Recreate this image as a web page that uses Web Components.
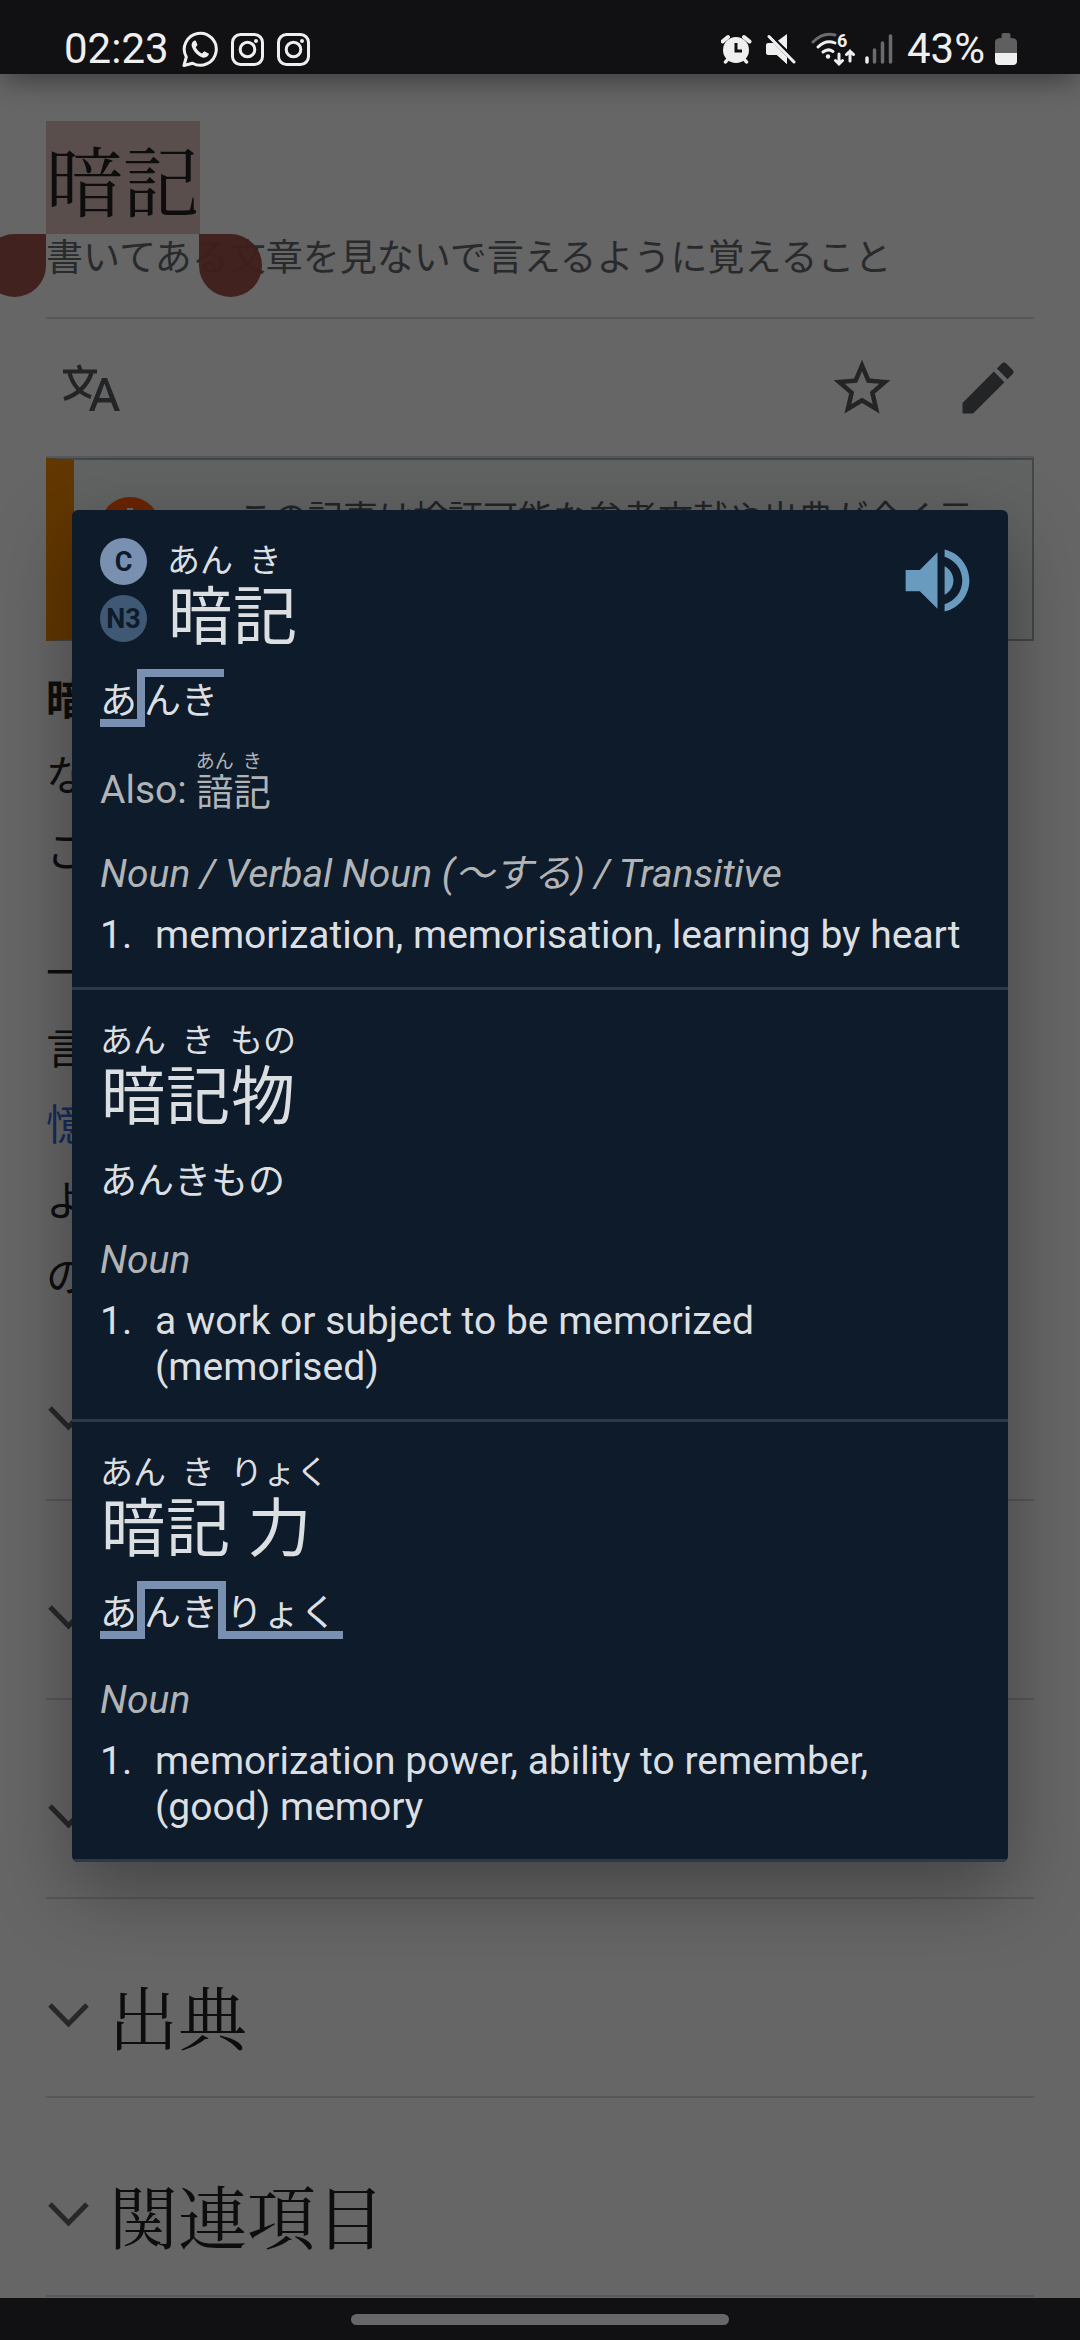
<!DOCTYPE html>
<html lang="ja">
<head>
<meta charset="utf-8">
<meta name="viewport" content="width=device-width, initial-scale=1">
<title>暗記</title>
<style>
  html, body { margin: 0; background: #666; }
  body {
    --jp: "Noto Sans CJK JP";
    --mincho: "Noto Serif CJK JP", "Noto Serif JP", "Noto Sans CJK JP", serif;
    font-family: Roboto, var(--jp), sans-serif;
  }
</style>
</head>
<body>
<app-screen>
  <status-bar slot="status"></status-bar>

  <article-header heading="暗記" description="書いてある文章を見ないで言えるように覚えること"></article-header>
  <article-toolbar></article-toolbar>
  <issue-notice>この記事は検証可能な参考文献や出典が全く示</issue-notice>
  <article-text><p><b>暗</b><br>な<br>こ</p><p>一<br>言<br><a href="#memory">憶</a><br>よ<br>の</p></article-text>
  <article-section first></article-section>
  <article-section></article-section>
  <article-section></article-section>
  <article-section>出典</article-section>
  <article-section>関連項目</article-section>

  <dictionary-popup slot="popup">
    <dictionary-entry pos="Noun / Verbal Noun (〜する) / Transitive" audio>
      <level-badge slot="badge">C</level-badge>
      <level-badge slot="badge" muted>N3</level-badge>
      <furi-text slot="head" text="暗:あん 記:き"></furi-text>
      <pitch-reading slot="reading" parts="あ:low んき:high"></pitch-reading>
      <also-line slot="also">Also: <furi-text small text="諳:あん 記:き"></furi-text></also-line>
      memorization, memorisation, learning by heart
    </dictionary-entry>
    <dictionary-entry pos="Noun">
      <furi-text slot="head" text="暗:あん 記:き 物:もの"></furi-text>
      <pitch-reading slot="reading" parts="あんきもの"></pitch-reading>
      a work or subject to be memorized (memorised)
    </dictionary-entry>
    <dictionary-entry pos="Noun">
      <furi-text slot="head" text="暗:あん 記:き 力:りょく"></furi-text>
      <pitch-reading slot="reading" parts="あ:low んき:high-drop りょく:low-end"></pitch-reading>
      memorization power, ability to remember, (good) memory
    </dictionary-entry>
  </dictionary-popup>

  <nav-bar slot="nav"></nav-bar>
</app-screen>

<script>
const component = (name, render) => customElements.define(name, class extends HTMLElement {
  constructor() { super(); this.attachShadow({ mode: 'open' }); }
  connectedCallback() { this.shadowRoot.innerHTML = render(this); }
});

component('app-screen', () => `
  <style>
    :host { display: flex; flex-direction: column; position: relative; min-height: 100vh; overflow: hidden; background: #666; }
    main { flex: 1; padding: 0 46px; }
  </style>
  <slot name="status"></slot>
  <main><slot></slot></main>
  <slot name="nav"></slot>
  <slot name="popup"></slot>`);

component('status-bar', () => `
  <style>
    :host { display: flex; justify-content: space-between; align-items: flex-end; height: 74px; padding: 0 63px 0 64px;
      box-sizing: border-box; background: #111113; color: #efefef; font-size: 42px; line-height: 48px; position: relative; z-index: 1;
      box-shadow: 0 10px 28px -4px rgba(0,0,0,.42); }
    div { display: flex; align-items: center; height: 50px; }
    svg { display: block; }
    .left { gap: 13px; } .right { gap: 10px; }
    .percent { margin-left: 4px; }
    .six { font: 700 18px Roboto, sans-serif; }
  </style>
  <div class="left">
    <span>02:23</span>
    <svg width="36" height="36" viewBox="0 0 36 36"><path d="M2 34.500L4.300 26A16 16 0 1 1 10.500 32.200Z" fill="none" stroke="#efefef" stroke-width="3" stroke-linejoin="round"/><path d="M12.500 9.500C10.500 10.500 9 12.800 9.800 15.500C11.500 20.500 15.500 24.800 20.500 26.500C23.500 27.300 26.500 25.500 27 22.800L22.300 20.200L20 22.500C17.500 21.500 15 19 13.700 16.300L15.500 13.900L13.800 9.800Z" fill="#efefef"/></svg>
    <svg width="33" height="33" viewBox="0 0 33 33" fill="none" stroke="#efefef" stroke-width="3"><rect x="1.500" y="1.500" width="30" height="30" rx="8"/><circle cx="16.500" cy="16.500" r="7.300"/><circle cx="25" cy="8" r="2" fill="#efefef" stroke="none"/></svg>
    <svg width="33" height="33" viewBox="0 0 33 33" fill="none" stroke="#efefef" stroke-width="3"><rect x="1.500" y="1.500" width="30" height="30" rx="8"/><circle cx="16.500" cy="16.500" r="7.300"/><circle cx="25" cy="8" r="2" fill="#efefef" stroke="none"/></svg>
  </div>
  <div class="right">
    <svg width="34" height="30" viewBox="0 0 34 30"><circle cx="15" cy="16" r="13" fill="#efefef"/><path d="M1.500 7.500L7 3M28.500 7.500L23 3" stroke="#efefef" stroke-width="4" stroke-linecap="round"/><path d="M4.500 28L7 25M25.500 28L23 25" stroke="#efefef" stroke-width="3.500" stroke-linecap="round"/><path d="M15 9V17H21" fill="none" stroke="#111113" stroke-width="3"/></svg>
    <svg width="36" height="30" viewBox="0 0 36 30"><path d="M1 12Q1 9 4 9H9L22 21V30L12 21H4Q1 21 1 18ZM12.500 7L22 0V15.500Z" fill="#efefef"/><path d="M4 2.500L29 28" stroke="#111113" stroke-width="7"/><path d="M4 2.500L29 28" stroke="#efefef" stroke-width="3" stroke-linecap="round"/><path d="M1 12Q1 9 4 9H8.500L22 23V30L12 21H4Q1 21 1 18Z" fill="#efefef"/></svg>
    <svg width="44" height="45" viewBox="0 -6 44 45" fill="none" stroke-linecap="round" stroke-width="3"><path d="M2 9Q12 -1 24 2" stroke="#6b6b6c"/><path d="M7 14Q15 6 24 10M12 19Q17 15 22 18.500" stroke="#efefef"/><circle cx="17" cy="23.500" r="2.200" fill="#efefef"/><path d="M28 21V31M24.500 27.500L28 31L31.500 27.500M39 28V18M35.500 21.500L39 18L42.500 21.500" stroke="#efefef"/><text class="six" x="26" y="14" fill="#efefef">6</text></svg>
    <svg width="28" height="30" viewBox="0 0 28 30" stroke-linecap="round" stroke-width="3.500"><path d="M2 24V28" stroke="#efefef"/><path d="M9.500 16V28M17.500 9V28M25.500 2V28" stroke="#6b6b6c"/></svg>
    <span class="percent">43%</span>
    <svg width="22" height="32" viewBox="0 0 22 32"><path d="M6.500 5V2Q6.500 0 8.500 0H13.500Q15.500 0 15.500 2V5Q22 5 22 9V20H0V9Q0 5 6.500 5Z" fill="#5f5f60"/><path d="M0 20H22V28Q22 32 18 32H4Q0 32 0 28Z" fill="#efefef"/></svg>
  </div>`);

component('article-header', el => `
  <style>
    :host { display: block; padding: 47px 0 35px; border-bottom: 2px solid #55575b; }
    h1 { margin: 0; font: 400 77px/113px var(--mincho); color: #0d0d0d; display: flex; }
    mark { position: relative; background: #594e4c; color: inherit; }
    i { position: absolute; top: 100%; width: 63px; height: 63px; background: #3f1f1c; opacity: .96; box-sizing: border-box; }
    .start { right: 100%; border-radius: 32px 0 32px 32px; }
    .end { left: 153px; border-radius: 0 32px 32px 32px; }
    p { margin: 0; padding-top: 2px; font-size: 37px; line-height: 46px; color: #292a2c; }
  </style>
  <h1><mark>${el.getAttribute('heading')}<i class="start"></i><i class="end"></i></mark></h1>
  <p>${el.getAttribute('description')}</p>`);

component('article-toolbar', () => `
  <style>
    :host { display: flex; align-items: center; height: 137px; padding: 0 12px 0 11px; border-bottom: 2px solid #55575a; }
    button { border: 0; padding: 0; background: none; color: #232426; }
    svg { display: block; fill: currentColor; }
    .grow { flex: 1; }
    .star { margin-right: 58px; }
  </style>
  <button aria-label="言語"><svg width="68" height="68" viewBox="0 0 68 68"><path d="M6 17.500H40M21.500 11L24 17" fill="none" stroke="currentColor" stroke-width="4"/><path d="M12.500 19Q18 38 34 43M34.500 19Q28 38 7 45" fill="none" stroke="currentColor" stroke-width="4.200"/><path d="M45 24H50L63 57H57.500L54.300 48.500H40.500L37.300 57H32ZM42.200 44H52.700L47.500 29.500Z" fill-rule="evenodd"/></svg></button>
  <span class="grow"></span>
  <button class="star" aria-label="保存"><svg width="68" height="68" viewBox="0 0 24 24"><path d="M22 9.240l-7.190-.62L12 2 9.190 8.630 2 9.240l5.460 4.730L5.820 21 12 17.270 18.180 21l-1.630-7.030L22 9.240zM12 15.400l-3.760 2.270 1-4.280-3.320-2.880 4.380-.38L12 6.100l1.710 4.040 4.380.38-3.320 2.880 1 4.280L12 15.400z"/></svg></button>
  <button aria-label="編集"><svg width="68" height="68" viewBox="0 0 24 24"><path d="M3 17.250V21h3.750L17.810 9.940l-3.750-3.750L3 17.250zM20.710 7.040c.39-.39.39-1.020 0-1.410l-2.340-2.340c-.39-.39-1.020-.39-1.410 0l-1.830 1.830 3.750 3.750 1.830-1.830z"/></svg></button>`);

component('issue-notice', () => `
  <style>
    :host { display: flex; gap: 78px; height: 183px; box-sizing: border-box; padding: 37px 0 0 26px; border: 2px solid #43464a;
      border-left: 28px solid #623700; background: #606361; color: #232426; font-size: 35px; line-height: 46px; white-space: nowrap; overflow: hidden; }
    svg { flex: none; }
  </style>
  <svg width="60" height="60" viewBox="0 0 60 60"><circle cx="30" cy="30" r="30" fill="#6a2400"/><path d="M30 11V34M30 40V46" stroke="#666" stroke-width="6"/></svg>
  <span><slot></slot></span>`);

component('article-text', () => `
  <style>
    :host { display: block; font-size: 42px; line-height: 76px; color: #0e0e0e; padding-top: 22px; }
    ::slotted(p) { margin: 0 0 45px; }
    ::slotted(p:last-child) { margin: 0; }
  </style><slot></slot>`);

component('article-section', el => `
  <style>
    :host { display: block; padding: ${el.hasAttribute('first') ? 55 : 69}px 0 32px; border-bottom: 2px solid #55575a; }
    h2 { margin: 0; font: inherit; }
    button { display: flex; align-items: center; width: 100%; height: 96px; border: 0; padding: 0; background: none; text-align: left;
      font: 400 69px/96px var(--mincho); color: #0d0d0d; }
    svg { width: 63px; height: 40px; flex: none; }
  </style>
  <h2><button aria-expanded="false" aria-label="${el.textContent || '節'}"><svg viewBox="0 0 63 40"><path d="M4 9L22.500 28L41 9" fill="none" stroke="#26282a" stroke-width="5"/></svg><slot></slot></button></h2>`);

component('dictionary-popup', () => `
  <style>
    :host { display: block; position: absolute; z-index: 2; left: 72px; right: 72px; top: 510px; border-radius: 6px; overflow: hidden;
      background: #0e1b2a; color: #dcdfe2; box-shadow: 0 28px 76px rgba(0,0,0,.34); font-size: 39px; line-height: 46px; }
  </style><slot></slot>`);

component('dictionary-entry', el => `
  <style>
    :host { display: block; padding: 28px 28px 29px; border-bottom: 3px solid #2c3949; }
    header { display: flex; align-items: flex-start; }
    .badges { display: flex; flex-direction: column; gap: 10px; margin-right: ${el.querySelector('level-badge') ? 20 : 0}px; }
    .head { flex: 1; }
    button { border: 0; padding: 0; background: none; height: 85px; }
    svg { display: block; fill: #689bbd; }
    .pos { margin: 38px 0 15px; font-style: italic; color: #b1b4b7; }
    ol { margin: 0; padding: 0; list-style: none; }
    li { display: flex; }
    li > b { flex: none; width: 55px; font-weight: 400; }
  </style>
  <header>
    <div class="badges"><slot name="badge"></slot></div>
    <div class="head"><slot name="head"></slot></div>
    ${el.hasAttribute('audio') ? `<button aria-label="発音"><svg width="85" height="85" viewBox="0 0 24 24"><path d="M3 9v6h4l5 5V4L7 9H3zm13.500 3c0-1.770-1.020-3.290-2.500-4.030v8.050c1.480-.73 2.500-2.250 2.500-4.020zM14 3.230v2.060c2.890.86 5 3.540 5 6.710s-2.110 5.850-5 6.710v2.060c4.010-.91 7-4.490 7-8.770s-2.990-7.860-7-8.770z"/></svg></button>` : ''}
  </header>
  <slot name="reading"></slot>
  <slot name="also"></slot>
  <p class="pos">${el.getAttribute('pos')}</p>
  <ol><li><b>1.</b><span><slot></slot></span></li></ol>`);

component('level-badge', el => `
  <style>
    :host { display: flex; align-items: center; justify-content: center; width: 47px; height: 47px; border-radius: 50%;
      background: ${el.hasAttribute('muted') ? '#3f5975' : '#7a90b0'}; color: #0e1b2a; font-size: 27px; line-height: 30px; font-weight: 700; }
  </style><slot></slot>`);

component('furi-text', el => `
  <style>
    :host { display: flex; line-height: 68px; font-size: 64px; }
    :host([small]) { display: inline-flex; line-height: 38px; font-size: 37px; }
    ruby { display: flex; flex-direction: column-reverse; align-items: center; }
    rt { display: block; font-size: 33px; line-height: 46px; text-align: center; }
    :host([small]) rt { font-size: 19px; line-height: 26px; }
  </style>${el.getAttribute('text').split(' ').map(p => { const [k, f] = p.split(':'); return `<ruby><span>${k}</span><rt>${f}</rt></ruby>`; }).join('')}`);

component('pitch-reading', el => `
  <style>
    :host { display: flex; font-size: 37px; line-height: 50px; margin-top: 17px; --line: 8px solid #7a90b0; }
    span { display: block; }
    .low, .high, .high-drop, .low-end { padding: 8px 0; height: 42px; }
    .low { border-bottom: var(--line); border-right: var(--line); padding-bottom: 0; }
    .high { border-top: var(--line); padding-top: 0; padding-right: 6px; }
    .low + .high, .low + .high-drop { margin-left: -8px; padding-left: 7px; }
    .high-drop { border-top: var(--line); border-right: var(--line); padding-top: 0; }
    .low-end { border-bottom: var(--line); padding-bottom: 0; padding-right: 6px; }
    .plain { padding-top: 8px; height: 42px; }
  </style>${el.getAttribute('parts').split(' ').map(p => { const [t, c] = p.split(':'); return `<span class="${c || 'plain'}">${t}</span>`; }).join('')}`);

component('also-line', () => `
  <style>
    :host { display: flex; align-items: flex-end; gap: 9px; margin-top: 22px; color: #b1b4b7; }
  </style><slot></slot>`);

component('nav-bar', () => `
  <style>
    :host { display: flex; justify-content: center; align-items: center; height: 42px; background: #111113; position: relative; }
    i { width: 35%; height: 11px; border-radius: 6px; background: #67676a; }
  </style><i></i>`);
</script>
<style>
  article-text a { color: #172c5c; text-decoration: none; }
</style>
</body>
</html>
